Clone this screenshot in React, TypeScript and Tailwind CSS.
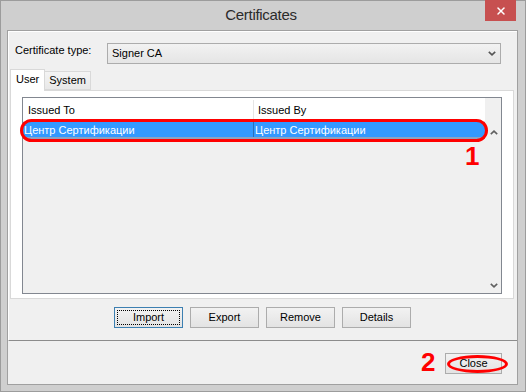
import { X } from "lucide-react";

function Chevron({ up = false, className = "" }: { up?: boolean; className?: string }) {
  return (
    <svg width="8" height="5" viewBox="0 0 8 5" className={className}>
      <polyline
        points={up ? "0.8,4.2 4,1.2 7.2,4.2" : "0.8,0.8 4,3.8 7.2,0.8"}
        fill="none"
        stroke="currentColor"
        strokeWidth="1.6"
      />
    </svg>
  );
}

function Btn({ label, focused = false, w = "w-[69px]" }: { label: string; focused?: boolean; w?: string }) {
  return (
    <div
      className={`relative ${w} h-[21px] flex items-center justify-center border bg-gradient-to-b from-[#f2f2f2] to-[#e3e3e3] ${
        focused ? "border-[#3c7fb1]" : "border-[#acacac]"
      }`}
    >
      {focused && <div className="absolute inset-[2px] border border-dotted border-black" />}
      <span className="leading-[13px]">{label}</span>
    </div>
  );
}

export default function App() {
  return (
    <div className="relative w-[526px] h-[392px] font-['Liberation_Sans',Arial,sans-serif] text-[11px] text-black">
      <div className="w-full h-full bg-[#cfcfcf] border border-[#9c9c9c] flex flex-col">
        {/* title bar */}
        <div className="h-[29px] relative flex items-center justify-center">
          <span className="text-[15px] tracking-[-0.3px] text-[#2b2b2b] ml-[-4px]">Certificates</span>
          <div className="absolute right-[9px] top-[-1px] w-[31px] h-[21px] bg-[#c75050] flex items-center justify-center">
            <X className="w-[12px] h-[12px] text-white" strokeWidth={3} />
          </div>
        </div>

        {/* client */}
        <div className="ml-[6px] mr-[7px] mb-[6px] flex-1 border border-[#a0a0a0] bg-[#f0f0f0] flex flex-col">
          <div className="h-[310px] border-t border-l border-white border-b border-b-[#8c8c8c] flex flex-col">
            {/* type row */}
            <div className="flex items-start pl-[6px] mt-[11px]">
              <span className="w-[92px] leading-[13px] pt-[1px]">Certificate type:</span>
              <div className="w-[394px] h-[21px] border border-[#acacac] bg-gradient-to-b from-[#f2f2f2] to-[#e5e5e5] flex items-center justify-between pl-[4px] pr-[4px]">
                <span className="leading-[13px]">Signer CA</span>
                <Chevron className="text-[#555]" />
              </div>
            </div>

            {/* tabs */}
            <div className="flex items-end ml-[1px] mt-[5px] h-[21px]">
              <div className="relative z-10 h-[22px] -mb-px px-[5px] pt-[3px] border border-b-0 border-[#d9d9d9] bg-white leading-[13px]">
                User
              </div>
              <div className="h-[19px] px-[4px] pt-[2px] border border-l-0 border-[#d9d9d9] bg-gradient-to-b from-[#f4f4f4] to-[#e8e8e8] leading-[13px]">
                System
              </div>
            </div>

            {/* tab page */}
            <div className="h-[209px] ml-[1px] mr-[3px] border border-[#d9d9d9] bg-white pt-[6px] pl-[11px] pr-[11px] pb-[4px] flex">
              <div className="flex-1 border border-[#828790] bg-[#f0f0f0] flex">
                <div className="flex-1 flex flex-col">
                  <div className="h-[24px] bg-white border-b border-[#e5e5e5] flex items-center pt-[2px]">
                    <div className="w-[230px] pl-[5px] leading-[13px]">Issued To</div>
                    <div className="w-px h-full bg-[#e5e5e5]" />
                    <div className="pl-[4px] leading-[13px]">Issued By</div>
                  </div>
                  <div className="h-[17px] bg-[#3399ff] border-b-2 border-[#8da2c2] flex text-white">
                    <div className="w-[230px] pl-[1px] flex items-end leading-[13px]">Центр Сертификации</div>
                    <div className="w-px bg-[#2a6fb8]" />
                    <div className="pl-[1px] flex items-end leading-[13px]">Центр Сертификации</div>
                  </div>
                </div>
                <div className="w-[16px] flex flex-col items-center justify-between pt-[32px] pb-[5px] text-[#606060]">
                  <Chevron up className="ml-[1px]" />
                  <Chevron className="ml-[1px]" />
                </div>
              </div>
            </div>

            {/* buttons */}
            <div className="flex justify-center gap-[7px] mt-[8px] pr-[1px]">
              <Btn label="Import" focused />
              <Btn label="Export" />
              <Btn label="Remove" />
              <Btn label="Details" />
            </div>
          </div>

          {/* close area */}
          <div className="flex-1 flex items-center justify-end pr-[15px] pt-[1px]">
            <Btn label="Close" w="w-[57px]" />
          </div>
        </div>
      </div>

      {/* annotations */}
      <div className="absolute left-[20px] top-[119px] w-[468px] h-[23px] border-[3px] border-[#ff0000] rounded-full" />
      <div className="absolute left-[465px] top-[143px] text-[26px] leading-none font-bold text-[#ff0000]">1</div>
      <div className="absolute left-[447px] top-[355px] w-[61px] h-[18px] border-[3px] border-[#ff0000] rounded-[50%]" />
      <div className="absolute left-[421px] top-[349px] text-[26px] leading-none font-bold text-[#ff0000]">2</div>
    </div>
  );
}
